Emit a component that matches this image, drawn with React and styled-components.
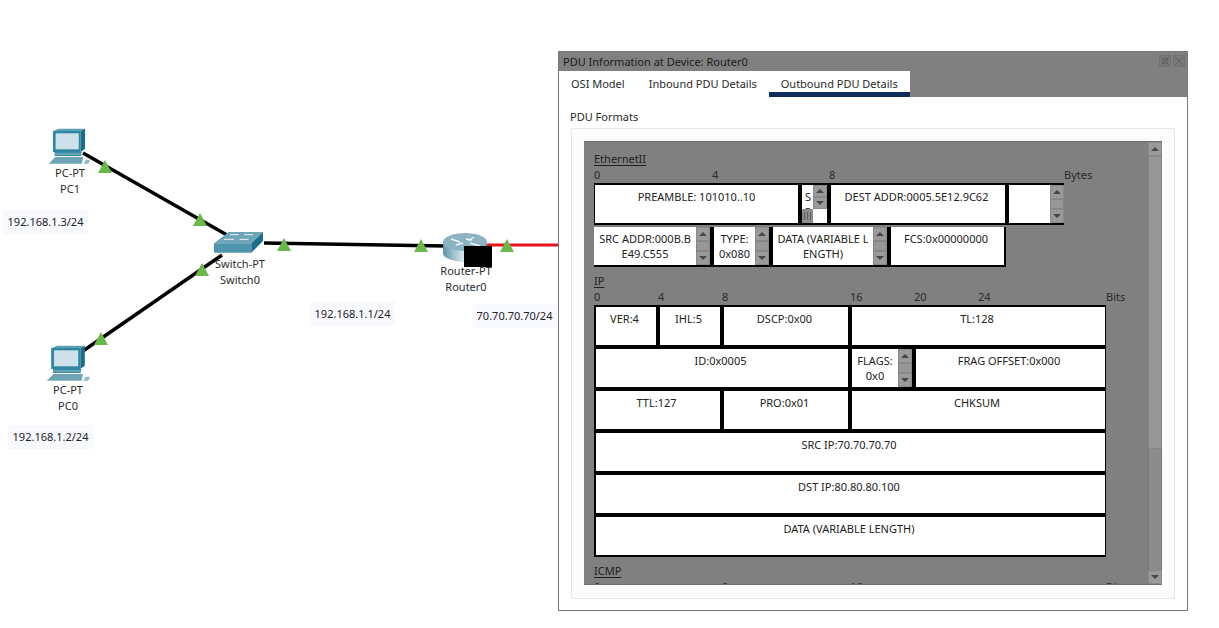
import React from 'react';
import styled, { createGlobalStyle } from 'styled-components';

const GlobalStyle = createGlobalStyle`
  html, body {
    margin: 0;
    background: #fff;
    overflow: hidden;
  }
  body {
    font-family: "Noto Sans", "Open Sans", sans-serif;
    font-size: 11px;
    color: #222;
  }
`;

const Page = styled.div`
  position: relative;
  width: 1219px;
  height: 628px;
  overflow: hidden;
  background: #fff;
`;

// topology canvas
const Links = styled.svg`
  position: absolute;
  inset: 0;
`;

const Device = styled.svg`
  position: absolute;
  left: ${(p) => p.$x}px;
  top: ${(p) => p.$y}px;
`;

const NodeLabel = styled.div`
  position: absolute;
  left: ${(p) => p.$x}px;
  top: ${(p) => p.$y}px;
  transform: translateX(-50%);
  display: flex;
  flex-direction: column;
  align-items: center;
  line-height: 16px;
  white-space: nowrap;
  color: #2b2b2b;
`;

const AddressNote = styled.div`
  position: absolute;
  left: ${(p) => p.$x}px;
  top: ${(p) => p.$y}px;
  width: 85px;
  height: 24px;
  line-height: 24px;
  text-align: center;
  background: #f8f8ff;
  color: #222;
`;

const BlackPatch = styled.div`
  position: absolute;
  left: 464px;
  top: 246px;
  width: 28px;
  height: 21px;
  background: #000;
`;

// PDU window
const Window = styled.div`
  position: absolute;
  left: 558px;
  top: 51px;
  width: 630px;
  height: 560px;
  box-sizing: border-box;
  border: 1px solid #777;
  background: #fff;
  display: flex;
  flex-direction: column;
`;

const TitleBar = styled.div`
  height: 19px;
  flex: none;
  display: flex;
  align-items: center;
  justify-content: space-between;
  padding: 0 2px 0 4px;
  background: #808080;
  color: #1c1c1c;
  line-height: 19px;
`;

const TitleButtons = styled.div`
  display: flex;
  gap: 2px;
  margin-top: -1px;
`;

const TabStrip = styled.div`
  height: 26px;
  flex: none;
  display: flex;
  background: #808080;
`;

const Tab = styled.div`
  padding: 0 12px;
  line-height: 26px;
  background: #fff;
  color: #2a2a2a;
  box-shadow: ${(p) => (p.$active ? 'inset 0 -5px 0 #0f2d5a' : 'none')};
`;

const TabFill = styled.div`
  flex: 1;
`;

const Body = styled.div`
  flex: 1;
  padding: 12px 12px 0;
`;

const FormatsLabel = styled.div`
  height: 16px;
  line-height: 16px;
  margin: 0 0 3px -1px;
  color: #2a2a2a;
`;

const GroupBox = styled.div`
  border: 1px solid #e6e6e6;
  background: #fcfcfc;
  padding: 12px 12px 13px;
  border-radius: 2px;
`;

const ScrollArea = styled.div`
  height: 444px;
  box-sizing: border-box;
  border-top: 1px solid #6f6f6f;
  border-bottom: 1px solid #6f6f6f;
  background: #808080;
  display: flex;
`;

const ScrollContent = styled.div`
  flex: 1;
  min-width: 0;
  overflow: hidden;
  padding: 10px 0 0 10px;
`;

const Section = styled.section`
  margin-top: ${(p) => p.$top || 0}px;
`;

const SectionName = styled.div`
  height: 16px;
  line-height: 14px;
  color: #222;
  & > span {
    text-decoration: underline;
    text-underline-offset: 2px;
  }
`;

const Ruler = styled.div`
  display: flex;
  height: 15px;
  line-height: 13px;
  color: #2a2a2a;
`;

const Tick = styled.span`
  width: ${(p) => p.$w}px;
  flex: none;
`;

const Packet = styled.div`
  width: ${(p) => p.$w}px;
  box-sizing: border-box;
  background: #000;
  padding: ${(p) => p.$pad};
  margin-top: ${(p) => p.$top || 0}px;
  display: flex;
  flex-direction: column;
  gap: 4px;
`;

const Row = styled.div`
  display: flex;
  gap: 4px;
  height: 38px;
`;

const Field = styled.div`
  width: ${(p) => (p.$w ? `${p.$w}px` : 'auto')};
  flex: ${(p) => (p.$w ? 'none' : '1')};
  display: flex;
  background: #fff;
  overflow: hidden;
`;

const FieldText = styled.div`
  flex: 1;
  min-width: 0;
  padding-top: 4px;
  text-align: center;
  line-height: 15px;
  white-space: nowrap;
  color: #222;
`;

// fields without a scroll bar sit a little left of their cell's centre
const PlainText = styled(FieldText)`
  padding-right: 3px;
`;

const ClippedColumn = styled.div`
  flex: 1;
  min-width: 0;
  display: flex;
  flex-direction: column;
`;

const ClippedText = styled(FieldText)`
  flex: 1;
  min-height: 0;
  overflow: hidden;
  padding-left: 1px;
`;

const SideColumn = styled.div`
  width: 14px;
  flex: none;
  display: flex;
  flex-direction: column;
`;

const CornerBlank = styled.div`
  height: 14px;
  flex: none;
  background: #fff;
`;

const HorizontalBar = styled.div`
  height: 14px;
  flex: none;
  display: flex;
  align-items: center;
  justify-content: center;
  gap: 2px;
  background: #8d8d8d;
  & > i {
    width: 1px;
    height: 8px;
    background: #5d5d5d;
  }
`;

const ScrollTrack = styled.div`
  width: 14px;
  flex: none;
  display: flex;
  flex-direction: column;
  background: #8a8a8a;
`;

const ShortTrack = styled(ScrollTrack)`
  flex: 1;
  min-height: 0;
`;

const ScrollButton = styled.div`
  flex: 0 1 14px;
  min-height: 0;
  box-sizing: border-box;
  display: flex;
  align-items: center;
  justify-content: center;
  background: #9a9a9a;
  border: 1px solid #8a8a8a;
  &::after {
    content: '';
    border-left: 4px solid transparent;
    border-right: 4px solid transparent;
    ${(p) => (p.$down ? 'border-top: 4px solid #474747;' : 'border-bottom: 4px solid #474747;')}
  }
`;

const ScrollThumb = styled.div`
  flex: ${(p) => (p.$h ? `0 0 ${p.$h}px` : '1 1 0')};
  min-height: 0;
  box-sizing: border-box;
  background: #979797;
  border: 1px solid #858585;
`;

const ScrollRest = styled.div`
  flex: 1 1 0;
  background: #8c8c8c;
  border-left: 1px solid #777;
  border-right: 1px solid #777;
`;

const MiniScroll = () => (
  <ScrollTrack>
    <ScrollButton />
    <ScrollThumb />
    <ScrollButton $down />
  </ScrollTrack>
);

const triangles = [
  [105, 160],
  [200, 213],
  [202, 263],
  [284, 238],
  [101, 332],
  [421, 239],
  [507, 239],
];

const PcIcon = ({ x, y, w }) => (
  <Device $x={x} $y={y} width={w} height="36" viewBox="0 0 127 108" preserveAspectRatio="none">
    <path d="M17 9 L32 2 H112 L99 9 Z" fill="#5ba0b5" />
    <path d="M99 9 L112 2 V62 L99 72 Z" fill="#1d6d8a" />
    <path d="M15 9 H99 V72 H15 Z" fill="#2f86a2" />
    <rect x="23" y="16" width="70" height="48" fill="#cde1ea" />
    <path d="M20 72 H102 L100 84 H20 Z" fill="#3f8ba5" />
    <path d="M20 78 H101" stroke="#a9cdd9" strokeWidth="2" />
    <path d="M2 107 L22 87 H107 L102 107 Z" fill="#6fa4b6" />
    <path d="M107 107 L115 95 H127 L122 107 Z" fill="#8fb7c5" />
  </Device>
);

const SwitchIcon = () => (
  <Device $x={214} $y={232} width="50" height="21" viewBox="0 0 150 63">
    <path d="M0 34 L44 0 H147 L112 34 Z" fill="#6fa5b8" />
    <path d="M0 34 H112 V62 H0 Z" fill="#4f94ad" />
    <path d="M112 34 L147 0 V27 L112 62 Z" fill="#1c6c8a" />
    <path d="M48 8 H74 M90 8 H118 M30 22 H60 M76 22 H104" stroke="#e6f0f4" strokeWidth="3" />
  </Device>
);

const RouterIcon = () => (
  <Device $x={443} $y={232} width="44" height="30" viewBox="0 0 44 30">
    <defs>
      <linearGradient id="routerBody" x1="0" x2="1" y1="0" y2="0">
        <stop offset="0" stopColor="#5f93a8" />
        <stop offset="0.45" stopColor="#d6e7ed" />
        <stop offset="1" stopColor="#5c9ab1" />
      </linearGradient>
    </defs>
    <path d="M0 10 V21 A22 9 0 0 0 44 21 V10 Z" fill="url(#routerBody)" />
    <ellipse cx="22" cy="10" rx="22" ry="9" fill="#8db2c2" />
    <path d="M8 7 L17 10 M13 13 L20 11 M25 9 L31 5 M27 11 L37 14 M23 7 L29 8" stroke="#f2f7f9" strokeWidth="1.4" fill="none" />
  </Device>
);

const CaptionIcon = ({ round }) => (
  <svg width="12" height="12" viewBox="0 0 12 12">
    <rect x="0.5" y="0.5" width="11" height="11" fill="#7a7a7a" stroke="#666" strokeDasharray="1 1" />
    <path d="M2 2 L10 10 M10 2 L2 10" stroke="#5f5f5f" strokeWidth="1" />
    {round && <circle cx="6" cy="6" r="3" fill="none" stroke="#666" />}
  </svg>
);

export default function App() {
  return (
    <Page>
      <GlobalStyle />
      <Links width="1219" height="628">
        <g stroke="#000" strokeWidth="3.5">
          <line x1="83" y1="153" x2="227" y2="235" />
          <line x1="83" y1="351" x2="222" y2="255" />
          <line x1="264" y1="243" x2="445" y2="246" />
        </g>
        <line x1="487" y1="245" x2="558" y2="245" stroke="#e8131b" strokeWidth="3" />
        {triangles.map(([x, y]) => (
          <polygon key={`${x}-${y}`} points={`${x},${y} ${x + 7},${y + 13} ${x - 7},${y + 13}`} fill="#6ab74a" />
        ))}
      </Links>

      <PcIcon x={48} y={128} w={42} />
      <PcIcon x={46} y={345} w={44} />
      <SwitchIcon />
      <RouterIcon />

      <NodeLabel $x={70} $y={165}><span>PC-PT</span><span>PC1</span></NodeLabel>
      <NodeLabel $x={68} $y={382}><span>PC-PT</span><span>PC0</span></NodeLabel>
      <NodeLabel $x={240} $y={256}><span>Switch-PT</span><span>Switch0</span></NodeLabel>
      <NodeLabel $x={466} $y={263}><span>Router-PT</span><span>Router0</span></NodeLabel>
      <BlackPatch />

      <AddressNote $x={3} $y={210}>192.168.1.3/24</AddressNote>
      <AddressNote $x={8} $y={425}>192.168.1.2/24</AddressNote>
      <AddressNote $x={310} $y={302}>192.168.1.1/24</AddressNote>
      <AddressNote $x={472} $y={304}>70.70.70.70/24</AddressNote>

      <Window>
        <TitleBar>
          <span>PDU Information at Device: Router0</span>
          <TitleButtons>
            <CaptionIcon round />
            <CaptionIcon />
          </TitleButtons>
        </TitleBar>
        <TabStrip>
          <Tab>OSI Model</Tab>
          <Tab>Inbound PDU Details</Tab>
          <Tab $active>Outbound PDU Details</Tab>
          <TabFill />
        </TabStrip>
        <Body>
          <FormatsLabel>PDU Formats</FormatsLabel>
          <GroupBox>
            <ScrollArea>
              <ScrollContent>
                <Section>
                  <SectionName><span>EthernetII</span></SectionName>
                  <Ruler>
                    <Tick $w={118}>0</Tick>
                    <Tick $w={117}>4</Tick>
                    <Tick $w={235}>8</Tick>
                    <Tick $w={40}>Bytes</Tick>
                  </Ruler>
                  <Packet $w={470} $pad="2px 0 2px 1px">
                    <Row>
                      <Field $w={203}>
                        <FieldText>PREAMBLE: 101010..10</FieldText>
                      </Field>
                      <Field $w={25}>
                        <ClippedColumn>
                          <ClippedText>S<br />P</ClippedText>
                          <HorizontalBar><i /><i /><i /></HorizontalBar>
                        </ClippedColumn>
                        <SideColumn>
                          <ShortTrack>
                            <ScrollButton />
                            <ScrollButton $down />
                          </ShortTrack>
                          <CornerBlank />
                        </SideColumn>
                      </Field>
                      <Field $w={174}>
                        <PlainText>DEST ADDR:0005.5E12.9C62</PlainText>
                      </Field>
                      <Field>
                        <FieldText />
                        <MiniScroll />
                      </Field>
                    </Row>
                  </Packet>
                  <Packet $w={412} $top={2} $pad="0 2px 2px 0">
                    <Row>
                      <Field $w={116}>
                        <FieldText>SRC ADDR:000B.B<br />E49.C555</FieldText>
                        <MiniScroll />
                      </Field>
                      <Field $w={55}>
                        <FieldText>TYPE:<br />0x080</FieldText>
                        <MiniScroll />
                      </Field>
                      <Field $w={114}>
                        <FieldText>DATA (VARIABLE L<br />ENGTH)</FieldText>
                        <MiniScroll />
                      </Field>
                      <Field>
                        <PlainText>FCS:0x00000000</PlainText>
                      </Field>
                    </Row>
                  </Packet>
                </Section>

                <Section $top={7}>
                  <SectionName><span>IP</span></SectionName>
                  <Ruler>
                    <Tick $w={64}>0</Tick>
                    <Tick $w={64}>4</Tick>
                    <Tick $w={128}>8</Tick>
                    <Tick $w={64}>16</Tick>
                    <Tick $w={64}>20</Tick>
                    <Tick $w={128}>24</Tick>
                    <Tick $w={30}>Bits</Tick>
                  </Ruler>
                  <Packet $w={512} $pad="2px 1px 2px 2px">
                    <Row>
                      <Field $w={60}><PlainText>VER:4</PlainText></Field>
                      <Field $w={60}><PlainText>IHL:5</PlainText></Field>
                      <Field $w={124}><PlainText>DSCP:0x00</PlainText></Field>
                      <Field><PlainText>TL:128</PlainText></Field>
                    </Row>
                    <Row>
                      <Field $w={252}><PlainText>ID:0x0005</PlainText></Field>
                      <Field $w={60}>
                        <FieldText>FLAGS:<br />0x0</FieldText>
                        <MiniScroll />
                      </Field>
                      <Field><PlainText>FRAG OFFSET:0x000</PlainText></Field>
                    </Row>
                    <Row>
                      <Field $w={124}><PlainText>TTL:127</PlainText></Field>
                      <Field $w={124}><PlainText>PRO:0x01</PlainText></Field>
                      <Field><PlainText>CHKSUM</PlainText></Field>
                    </Row>
                    <Row><Field><PlainText>SRC IP:70.70.70.70</PlainText></Field></Row>
                    <Row><Field><PlainText>DST IP:80.80.80.100</PlainText></Field></Row>
                    <Row><Field><PlainText>DATA (VARIABLE LENGTH)</PlainText></Field></Row>
                  </Packet>
                </Section>

                <Section $top={7}>
                  <SectionName><span>ICMP</span></SectionName>
                  <Ruler>
                    <Tick $w={128}>0</Tick>
                    <Tick $w={128}>8</Tick>
                    <Tick $w={256}>16</Tick>
                    <Tick $w={30}>Bits</Tick>
                  </Ruler>
                </Section>
              </ScrollContent>
              <ScrollTrack>
                <ScrollButton />
                <ScrollThumb $h={293} />
                <ScrollRest />
                <ScrollButton $down />
              </ScrollTrack>
            </ScrollArea>
          </GroupBox>
        </Body>
      </Window>
    </Page>
  );
}
